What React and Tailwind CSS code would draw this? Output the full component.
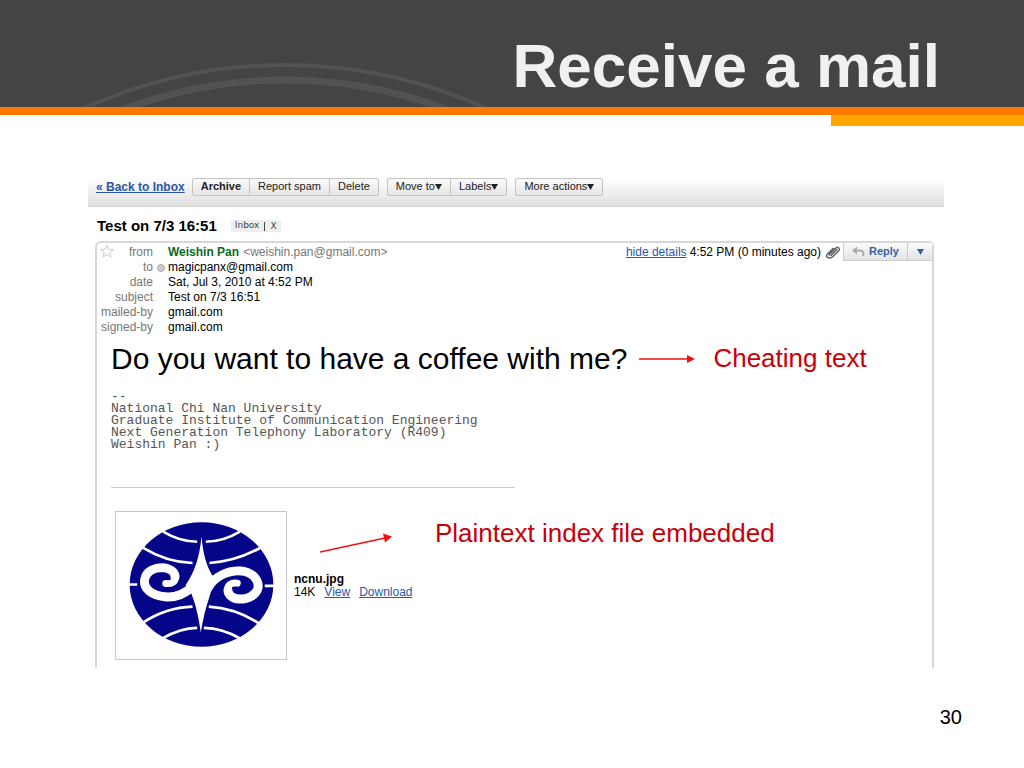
import React from "react";

function Caret({ className = "" }) {
  return (
    <svg viewBox="0 0 7 6" className={`h-1.5 w-[7px] ${className}`} fill="currentColor" aria-hidden="true">
      <path d="M0 0h7L3.5 6z" />
    </svg>
  );
}

function ToolButton({ children, caret, className = "" }) {
  return (
    <button
      type="button"
      className={`flex h-full items-center border-r border-[#c4c4c4] px-2 whitespace-nowrap last:border-r-0 ${className}`}
    >
      {children}
      {caret && <Caret />}
    </button>
  );
}

function ButtonGroup({ children }) {
  return (
    <div className="flex h-[18px] overflow-hidden rounded-xs border border-[#c4c4c4] bg-linear-to-b from-[#fafafa] to-[#e6e6e6] text-[11px] text-[#222]">
      {children}
    </div>
  );
}

function Header() {
  return (
    <header className="relative">
      <div className="relative flex h-[107px] items-center justify-end bg-[#444446] pt-6 pr-[84px]">
        <svg className="absolute bottom-0 left-20 h-12 w-[420px]" viewBox="80 59 420 48" fill="none" stroke="#525254" aria-hidden="true">
          <circle cx="285" cy="553" r="488" strokeWidth="4" />
          <circle cx="285" cy="538" r="458" strokeWidth="7" />
        </svg>
        <h1 className="relative text-[62px] leading-none font-bold text-[#f0f0f2]">Receive a mail</h1>
      </div>
      <div className="h-2 bg-[#ff7800]" />
      <div className="ml-auto h-[11px] w-[193px] bg-[#ffa500]" />
    </header>
  );
}

function Toolbar() {
  return (
    <nav className="flex h-9 items-center gap-[7px] border-b border-[#d4d4d4] bg-linear-to-b from-white from-20% to-[#e0e0e0] px-2 pb-1">
      <a href="#inbox" className="text-[12px] font-bold whitespace-nowrap text-[#2b57a7] underline">
        « Back to Inbox
      </a>
      <div className="flex gap-2">
        <ButtonGroup>
          <ToolButton className="font-bold">Archive</ToolButton>
          <ToolButton>Report spam</ToolButton>
          <ToolButton>Delete</ToolButton>
        </ButtonGroup>
        <ButtonGroup>
          <ToolButton caret>Move to</ToolButton>
          <ToolButton caret>Labels</ToolButton>
        </ButtonGroup>
        <ButtonGroup>
          <ToolButton caret>More actions</ToolButton>
        </ButtonGroup>
      </div>
    </nav>
  );
}

function Detail({ label, dot, children }) {
  return (
    <div className="flex">
      <dt className="w-14 text-right text-[#777]">{label}</dt>
      <dd className="flex items-center whitespace-nowrap">
        <span className="flex w-[15px] justify-center">
          {dot && <span className="size-2 rounded-full border border-[#aaa] bg-[#ccc]" />}
        </span>
        {children}
      </dd>
    </div>
  );
}

function Emblem() {
  return (
    <svg viewBox="48 34 513 444" className="size-full" role="img" aria-label="ncnu.jpg">
      <ellipse cx="306" cy="253" rx="217" ry="188" fill="#05058a" />
      <g fill="none" stroke="#fff" strokeWidth="8">
        <path d="M190 93Q240 123 293 124M319 124Q372 123 422 93" />
        <path d="M130 142Q200 185 279 188M330 188Q410 183 484 142" />
        <path d="M128 369Q200 322 279 320M328 320Q410 325 482 372" />
        <path d="M188 416Q240 385 293 384M313 384Q370 385 422 416" />
        <path d="M84 253H112M497 257H526" />
      </g>
      <path fill="#fff" d="M306 108C311 160 320 195 338 224L350 232C342 250 336 270 330 290C318 325 310 360 304 398C297 350 288 310 274 278L258 255C286 215 300 170 306 108Z" />
      <g fill="none" stroke="#fff" strokeLinecap="round">
        <path strokeWidth="27" d="M280 258C255 282 225 293 195 290C155 287 131 265 134 240C138 212 165 202 190 202C213 204 227 217 226 231" />
        <path strokeWidth="21" d="M228 228C228 246 215 252 198 250" />
        <path strokeWidth="27" d="M325 265C345 228 385 210 425 212C460 216 479 238 477 262C472 285 445 298 420 297C399 296 386 283 386 270" />
        <path strokeWidth="21" d="M384 271C384 254 396 246 414 249" />
      </g>
    </svg>
  );
}

function Message() {
  return (
    <article className="mr-2.5 ml-[7px] rounded-t-md border-x-2 border-t-2 border-[#d8d8d8]">
      <div className="flex items-start justify-between">
        <div className="relative pt-0.5">
          <svg viewBox="0 0 24 24" className="absolute top-0 left-0.5 size-4" fill="none" stroke="#ccc" strokeWidth="1.5" aria-hidden="true">
            <path d="M12 3l2.6 6.4 6.9.5-5.3 4.4 1.7 6.7-5.9-3.7L6.1 21l1.7-6.7L2.5 9.9l6.9-.5z" />
          </svg>
          <dl className="text-[12px] leading-[15px] text-black">
            <Detail label="from">
              <b className="text-[#0b6b1c]">Weishin Pan</b>
              <span className="ml-1 text-[#777]">&lt;weishin.pan@gmail.com&gt;</span>
            </Detail>
            <Detail label="to" dot>magicpanx@gmail.com</Detail>
            <Detail label="date">Sat, Jul 3, 2010 at 4:52 PM</Detail>
            <Detail label="subject">Test on 7/3 16:51</Detail>
            <Detail label="mailed-by">gmail.com</Detail>
            <Detail label="signed-by">gmail.com</Detail>
          </dl>
        </div>
        <div className="flex h-[18px] items-center text-[12px] whitespace-nowrap text-black">
          <a href="#details" className="mr-[3px] text-[#2b57a7] underline">hide details</a>
          4:52 PM (0 minutes ago)
          <svg viewBox="0 0 16 14" className="mr-0.5 ml-1 h-3.5 w-4" fill="none" stroke="#666" strokeWidth="1.5" strokeLinecap="round" aria-hidden="true">
            <path d="M4 10l7-7c1.5-1.5 4.5 0 3 2.5l-6 6C5.5 14 0 13 2 9.5l6-6M6 10.5l6-6M4.5 8.5l5-5" />
          </svg>
          <div className="flex h-full border-b border-l border-[#ccc] bg-linear-to-b from-[#fafafa] to-[#e4e4e4] text-[11px] font-bold text-[#3a5f9f]">
            <button type="button" className="flex items-center gap-1 border-r border-[#ccc] px-2">
              <svg viewBox="0 0 13 11" className="h-[11px] w-[13px]" fill="none" stroke="#aaa" strokeWidth="2" aria-hidden="true">
                <path d="M3 4.5h5c3 0 4 2 3 5.5" />
                <path d="M5 .5L0 4.5l5 4z" fill="#aaa" stroke="none" />
              </svg>
              Reply
            </button>
            <button type="button" aria-label="More reply options" className="flex w-6 items-center justify-center">
              <Caret />
            </button>
          </div>
        </div>
      </div>

      <div className="pt-1.5 pl-3.5">
        <div className="flex items-center whitespace-nowrap">
          <p className="text-[30px] leading-[36px] text-black">Do you want to have a coffee with me?</p>
          <svg viewBox="0 0 56 10" className="ml-3 h-2.5 w-14 shrink-0" aria-hidden="true">
            <path d="M0 5h48" stroke="#f01010" strokeWidth="1.5" />
            <path d="M48 1l8 4-8 4z" fill="#f01010" />
          </svg>
          <p className="ml-[18px] pb-0.5 text-[26px] leading-[32px] text-[#c8000a]">Cheating text</p>
        </div>

        <pre className="mt-3.5 font-['Liberation_Mono',monospace] text-[13px] leading-3 text-[#555]">
          {`--
National Chi Nan University
Graduate Institute of Communication Engineering
Next Generation Telephony Laboratory (R409)
Weishin Pan :)`}
        </pre>

        <hr className="mt-9 w-[404px] border-[#ccc]" />

        <div className="mt-[23px] ml-1 flex gap-[7px] pb-2">
          <div className="h-[149px] w-[172px] shrink-0 border border-[#c4c8cc]">
            <Emblem />
          </div>
          <div className="pt-1 text-[12px] leading-[13px] text-black">
            <div className="flex items-start gap-[41px] pl-[26px] whitespace-nowrap">
              <svg viewBox="0 0 74 24" className="mt-4 h-6 w-[74px] shrink-0" aria-hidden="true">
                <path d="M0 21L65 7" stroke="#f01010" strokeWidth="1.5" />
                <path d="M63 2.5l9 3-7 6z" fill="#f01010" />
              </svg>
              <p className="text-[26px] leading-[36px] text-[#c8000a]">Plaintext index file embedded</p>
            </div>
            <p className="mt-[18px] font-bold">ncnu.jpg</p>
            <p className="flex gap-[9px]">
              14K
              <a href="#view" className="text-[#2b57a7] underline">View</a>
              <a href="#download" className="text-[#2b57a7] underline">Download</a>
            </p>
          </div>
        </div>
      </div>
    </article>
  );
}

export default function App() {
  return (
    <div className="flex min-h-screen flex-col bg-white font-['Liberation_Sans',Arial,sans-serif]">
      <Header />
      <main className="mt-[45px] mr-20 ml-[88px]">
        <Toolbar />
        <div className="flex h-[34px] items-center gap-3.5 pt-1 pl-[9px]">
          <h2 className="text-[15px] font-bold text-black">Test on 7/3 16:51</h2>
          <div className="flex h-3 items-center gap-[5px] bg-[#eee] px-1 font-['DejaVu_Sans',sans-serif] text-[9px] text-[#444]">
            <span>Inbox</span>
            <button type="button" aria-label="Remove label Inbox" className="border-l border-[#444] pl-[5px] leading-[9px]">
              X
            </button>
          </div>
        </div>
        <Message />
      </main>
      <footer className="mt-auto pr-[62px] pb-9 text-right text-[20px] leading-[30px] text-black">30</footer>
    </div>
  );
}
